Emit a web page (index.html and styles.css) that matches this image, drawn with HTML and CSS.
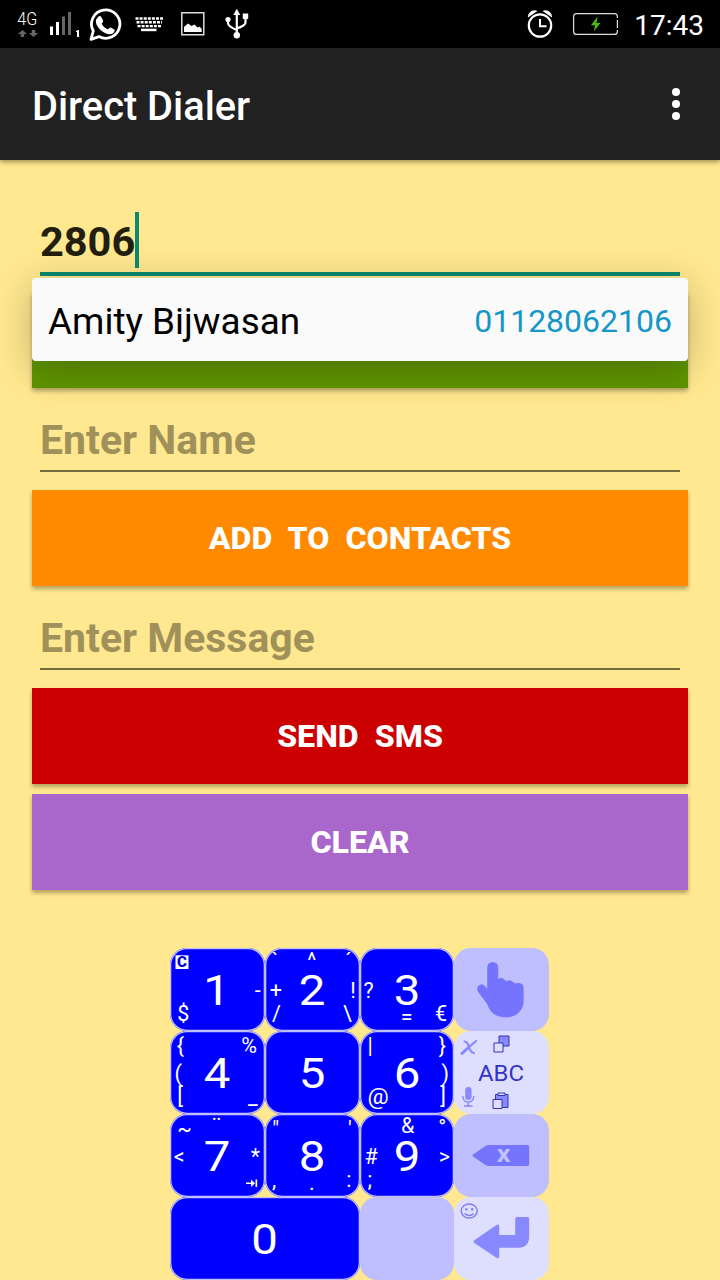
FILE: index.html
```html
<!DOCTYPE html>
<html lang="en">
<head>
<meta charset="utf-8">
<title>Direct Dialer</title>
<link rel="stylesheet" href="styles.css">
</head>
<body>
<div class="screen">
  <header class="status">
    <div class="status-left">
      <svg class="net" width="22" height="48" viewBox="17 0 22 48">
        <text class="net-label" x="17.3" y="25" textLength="20" lengthAdjust="spacingAndGlyphs">4G</text>
        <path fill="#666" d="M17.800 34l4.700-4 4.700 4h-3v3h-3.400v-3zM28.800 33l4.700 4 4.700-4h-3v-3h-3.400v3z"/>
      </svg>
      <svg class="signal" width="31" height="48" viewBox="49 0 31 48">
        <path fill="#fff" d="M50 26.500h3V35h-3zM56 22h3v13h-3zM76 31l2-1h1v7h-2v-5h-1z"/>
        <path fill="#666" d="M62 16.500h3V35h-3zM68 12h3v23h-3z"/>
      </svg>
      <svg class="chat" width="34" height="48" viewBox="88 0 34 48">
        <path fill="none" stroke="#fff" stroke-width="2.800" stroke-linejoin="round" d="M91 39.300l2.300-8.300A14.200 14.200 0 1 1 99 36.600z"/>
        <path fill="#fff" d="M98 17.200q1.600-1.800 3-.6l2.200 4.200q.3 1-1.600 3 2 4 6.200 5.800 2-2.400 2.800-2.200l3.800 2.200q.8.600-.3 2.400c-2 3-6 2.700-10 .4-5.500-3.200-9.500-9-7.800-13.200z"/>
      </svg>
      <svg class="keys-icon" width="28" height="48" viewBox="135 0 28 48">
        <path stroke="#fff" stroke-width="2.400" stroke-dasharray="3 1.100" d="M135.500 18.500h27.500M136.500 22.300h25.500M137.500 26.100h23.500"/>
        <path fill="#fff" d="M141 28.700h15.500v2.500H141z"/>
      </svg>
      <svg class="picture" width="25" height="48" viewBox="180 0 25 48">
        <path fill="none" stroke="#ddd" stroke-width="1.500" d="M181.800 12.800h22v22h-22z"/>
        <path fill="#fff" d="M184 32v-5l4-3.500 3.500 2.500 3-1.500 3 3 2-.7 2.200 2V32z"/>
      </svg>
      <svg class="usb" width="26" height="48" viewBox="224 0 26 48">
        <g fill="none" stroke="#fff" stroke-width="2.200"><path d="M236.800 34V13M228 20v3q0 3.500 8.800 7M245.500 17v5.500q0 3-8.700 6"/></g>
        <path fill="#fff" d="M233.300 15l3.500-6.200 3.500 6.200zM242.800 13.500h5.400V19h-5.400z"/><circle cx="228" cy="19.500" r="2.600" fill="#fff"/><circle cx="236.800" cy="35.300" r="3.200" fill="#fff"/>
      </svg>
    </div>
    <div class="status-right">
      <svg width="28" height="48" viewBox="526 0 28 48">
        <circle cx="540" cy="25.500" r="11.200" fill="none" stroke="#fff" stroke-width="2.200"/>
        <path fill="none" stroke="#fff" stroke-width="2" d="M540 19v7.200h6.500"/>
        <path fill="#fff" d="M528 17.500c-.5-5 5-9 9.500-6.500zM552 17.500c.5-5-5-9-9.500-6.500z"/>
      </svg>
      <svg width="46" height="48" viewBox="573 0 46 48">
        <rect x="573.600" y="13.600" width="43.800" height="20.800" rx="3" fill="none" stroke="#ddd" stroke-width="1.200"/>
        <path stroke="#000" stroke-width="2" d="M617.500 18v2M617.500 28v2"/>
        <path fill="#4db810" d="M597.500 16.500l-6.500 8.700h4l-1.300 6.300 6.800-8.500h-4z"/>
      </svg>
      <span class="clock">17:43</span>
    </div>
  </header>

  <div class="appbar">
    <h1 class="title">Direct Dialer</h1>
    <svg class="more" width="8" height="32" viewBox="0 0 8 32"><g fill="#fff"><circle cx="4" cy="4" r="4"/><circle cx="4" cy="16" r="4"/><circle cx="4" cy="28" r="4"/></g></svg>
  </div>

  <main class="form">
    <div class="field focused"><span class="value">2806</span><span class="caret"></span></div>
    <div class="dial-slot">
      <div class="button green"></div>
      <div class="suggestion"><span class="contact">Amity Bijwasan</span><span class="number">01128062106</span></div>
    </div>
    <div class="field">Enter Name</div>
    <div class="button orange">ADD  TO  CONTACTS</div>
    <div class="field">Enter Message</div>
    <div class="button red">SEND  SMS</div>
    <div class="button purple">CLEAR</div>
  </main>

  <div class="keypad">
    <div class="key blue"><svg viewBox="0 0 94.750 83">
      <rect x="5.500" y="7.300" width="13" height="13.700" fill="#fff"/><text class="badge" x="12" y="19.200">C</text>
      <text class="digit" transform="translate(46.500 57) scale(1.130 1)">1</text>
      <text x="13.200" y="73">$</text><text x="87.800" y="50">-</text></svg></div>
    <div class="key blue"><svg viewBox="0 0 94.750 83">
      <text class="digit" transform="translate(47 57) scale(1.130 1)">2</text>
      <text x="10" y="21">`</text><text x="46.800" y="19.500">^</text><text x="83.400" y="21">´</text>
      <text x="10.800" y="50">+</text><text x="88" y="50">!</text><text x="11.400" y="73">/</text><text x="82.400" y="73">\</text></svg></div>
    <div class="key blue"><svg viewBox="0 0 94.750 83">
      <text class="digit" transform="translate(47 57) scale(1.130 1)">3</text>
      <text x="8.700" y="50">?</text><text x="46.700" y="76">=</text><text x="81" y="73">€</text></svg></div>
    <div class="key mid"><svg viewBox="0 0 94.750 83">
      <path fill="#7474ff" d="M33.200 49V19.500a5.500 5.500 0 0 1 11 0V31q4-3 8 2.200 4.500-2.500 8.500 2.200 8.900-1.500 8.900 4.600V53c0 10-7.600 16.300-17.600 16.300-9.500 0-16-4-19-13.500l-8.600-11.500c-3.500-4.500 1.200-9.300 5.300-7.200q2 1.500 3.500 4z"/></svg></div>

    <div class="key blue"><svg viewBox="0 0 94.750 83">
      <text class="digit" transform="translate(47 57) scale(1.130 1)">4</text>
      <text x="10.500" y="22">{</text><text x="79.200" y="22">%</text><text x="8.200" y="50">(</text><text x="10.200" y="73">[</text><text x="82.800" y="73">_</text></svg></div>
    <div class="key blue"><svg viewBox="0 0 94.750 83">
      <text class="digit" transform="translate(47 57) scale(1.130 1)">5</text></svg></div>
    <div class="key blue"><svg viewBox="0 0 94.750 83">
      <text class="digit" transform="translate(47 57) scale(1.130 1)">6</text>
      <text x="10" y="22">|</text><text x="82.300" y="22">}</text><text x="85.300" y="50">)</text><text x="83" y="73">]</text><text transform="translate(18 73) scale(1.100 1)">@</text></svg></div>
    <div class="key pale"><svg viewBox="0 0 94.750 83">
      <path fill="none" stroke="#8989ff" stroke-width="3" stroke-linecap="round" d="M8 22.500L15 16"/><path fill="none" stroke="#8989ff" stroke-width="2.200" stroke-linecap="round" d="M15 16L22 10M10.500 10.500q3 0 4.500 5.500t5 6"/>
      <g stroke="#3333b8" stroke-width="1"><path fill="#8989ff" d="M45 5h10v10H45z"/><path fill="#dedeff" d="M40 12h9v9h-9z"/><path fill="#8989ff" d="M41.500 63.500h12.500v13H41.500z"/><path fill="#dedeff" d="M44 62h7v2.500h-7zM39 68.500h9v9h-9z"/></g>
      <rect x="11.200" y="56" width="6.400" height="13" rx="3.200" fill="#8989ff"/><path fill="none" stroke="#8989ff" stroke-width="1.500" d="M8.800 65c0 8.200 11 8.200 11 0M14.300 71v4M10 75h8.600"/>
      <text class="abc" transform="translate(47 50) scale(1.110 1)">ABC</text></svg></div>

    <div class="key blue"><svg viewBox="0 0 94.750 83">
      <text class="digit" transform="translate(47 57) scale(1.130 1)">7</text>
      <text x="14.500" y="22">~</text><text x="46.500" y="20">¨</text><text x="9.200" y="50">&lt;</text><text x="85.500" y="50">*</text>
      <path fill="#fff" d="M76 68.500h5v-3l4 3.800-4 3.800v-3h-5zM85.500 65.500h1.700v7.600h-1.700z"/></svg></div>
    <div class="key blue"><svg viewBox="0 0 94.750 83">
      <text class="digit" transform="translate(47 57) scale(1.130 1)">8</text>
      <text x="10.800" y="21.500">"</text><text x="84.800" y="21.500">'</text><text x="9" y="73">,</text><text x="46.800" y="76">.</text><text x="83.800" y="73">:</text></svg></div>
    <div class="key blue"><svg viewBox="0 0 94.750 83">
      <text class="digit" transform="translate(47 57) scale(1.130 1)">9</text>
      <text x="47.700" y="19">&amp;</text><text x="82.300" y="21">°</text><text x="11" y="50">#</text><text x="84.300" y="50">&gt;</text><text x="9.700" y="73">;</text></svg></div>
    <div class="key mid"><svg viewBox="0 0 94.750 83">
      <path fill="#7474ff" d="M19 40.500L31.500 32q1.500-1 3.500-1h38q2.200 0 2.200 2.200v16.600q0 2.200-2.200 2.200H35q-2 0-3.500-1L19 42.500q-1-1 0-2z"/>
      <text class="erase" x="49.600" y="48">x</text></svg></div>

    <div class="key blue wide"><svg viewBox="0 0 189.500 83">
      <text class="digit" transform="translate(94.500 57) scale(1.130 1)">0</text></svg></div>
    <div class="key mid"></div>
    <div class="key pale"><svg viewBox="0 0 94.750 83">
      <ellipse cx="15.200" cy="14" rx="8" ry="7" fill="none" stroke="#8080f5" stroke-width="1.500"/><path fill="none" stroke="#8080f5" stroke-width="1.300" d="M10.500 16.500q4.700 4 9.400 0"/><circle cx="12.300" cy="12.300" r="1.200" fill="#8080f5"/><circle cx="18.200" cy="12.300" r="1.200" fill="#8080f5"/>
      <path fill="#8888ff" d="M20.300 43.300L42.500 28q2.700-1.500 2.700 1.200V38H61.200V22q0-2 2-2h10q2 0 2 2v17q0 11.700-11 11.700h-19v8.800q0 2.700-2.700 1.200L20.300 46q-1.500-1.300 0-2.700z"/></svg></div>
  </div>
</div>
</body>
</html>
```
FILE: styles.css
```css
* { box-sizing: border-box; }
body { margin: 0; background: #ffe88f; font-family: Roboto, "Noto Sans", sans-serif; }
.screen { width: 720px; height: 1280px; overflow: hidden; display: flex; flex-direction: column; background: #ffe88f; }
svg { display: block; flex: none; }

.status { height: 48px; flex: none; background: #000; display: flex; justify-content: space-between; padding: 0 16px 0 17px; }
.status-left, .status-right { display: flex; }
.net-label { font-size: 18px; font-weight: 300; fill: #fff; }
.signal { margin-left: 10px; }
.chat { margin-left: 8px; }
.keys-icon { margin-left: 13px; }
.picture { margin-left: 17px; }
.usb { margin-left: 19px; }
.status-right { gap: 19px; }
.clock { margin-left: -4px; color: #fff; font-size: 28px; line-height: 51px; }

.appbar { height: 112px; flex: none; background: #212121; display: flex; justify-content: space-between; align-items: center; padding: 0 40px 0 32px; box-shadow: 0 2px 5px rgba(0,0,0,.4); }
.title { margin: 5px 0 0; color: #fff; font-size: 39.8px; font-weight: 500; line-height: 48px; }

.form { padding: 54px 32px 0; height: 788px; flex: none; }
.field { margin: 0 8px; height: 60px; border-bottom: 2px solid #736a3d; font-size: 41px; font-weight: 700; line-height: 56px; color: #9f9159; white-space: pre; }
.focused { display: flex; height: 62px; border-bottom: 4px solid #0b8a70; color: #231f10; }
.value { font-size: 41.5px; }
.caret { width: 4px; height: 56px; margin-top: -2px; background: #0b8a70; }
.dial-slot { position: relative; padding-top: 16px; margin-bottom: 24px; }
.button { height: 96px; font-size: 32.2px; font-weight: 800; line-height: 96px; text-align: center; color: #fff; white-space: pre; box-shadow: 0 3px 4px rgba(0,0,0,.3); }
.green { background: #609500; }
.orange { background: #ff8a00; margin: 18px 0 24px; }
.red { background: #cc0000; margin: 18px 0 10px; }
.purple { background: #a966cb; }
.suggestion { position: absolute; top: 2px; left: 0; right: 0; height: 83px; padding: 0 16px; display: flex; justify-content: space-between; background: #fafafa; border-radius: 4px; box-shadow: 0 8px 40px rgba(0,0,0,.24); white-space: nowrap; }
.contact { font-size: 36.9px; line-height: 87px; color: #000; }
.number { font-size: 32px; line-height: 86px; color: #1496c8; }

.keypad { width: 379px; margin: 0 0 0 170px; display: grid; grid-template-columns: repeat(4, 94.75px); grid-auto-rows: 83px; }
.key { border-radius: 17px; overflow: hidden; }
.key svg { width: 100%; height: 100%; }
.wide { grid-column: span 2; }
.blue { background: #0000fe; box-shadow: inset 0 0 0 1.3px #bfbfff; }
.mid { background: #bfbfff; }
.pale { background: #dedeff; }
.key text { fill: #fff; font-size: 21.5px; text-anchor: middle; }
.key .digit { font-size: 42px; }
.key .badge { fill: #0000d0; font-size: 15px; font-weight: 900; }
.key .abc { fill: #3333c8; font-size: 21.5px; }
.key .erase { fill: #c4c4ff; font-family: "Noto Sans", sans-serif; font-size: 23px; font-weight: 700; }
```
